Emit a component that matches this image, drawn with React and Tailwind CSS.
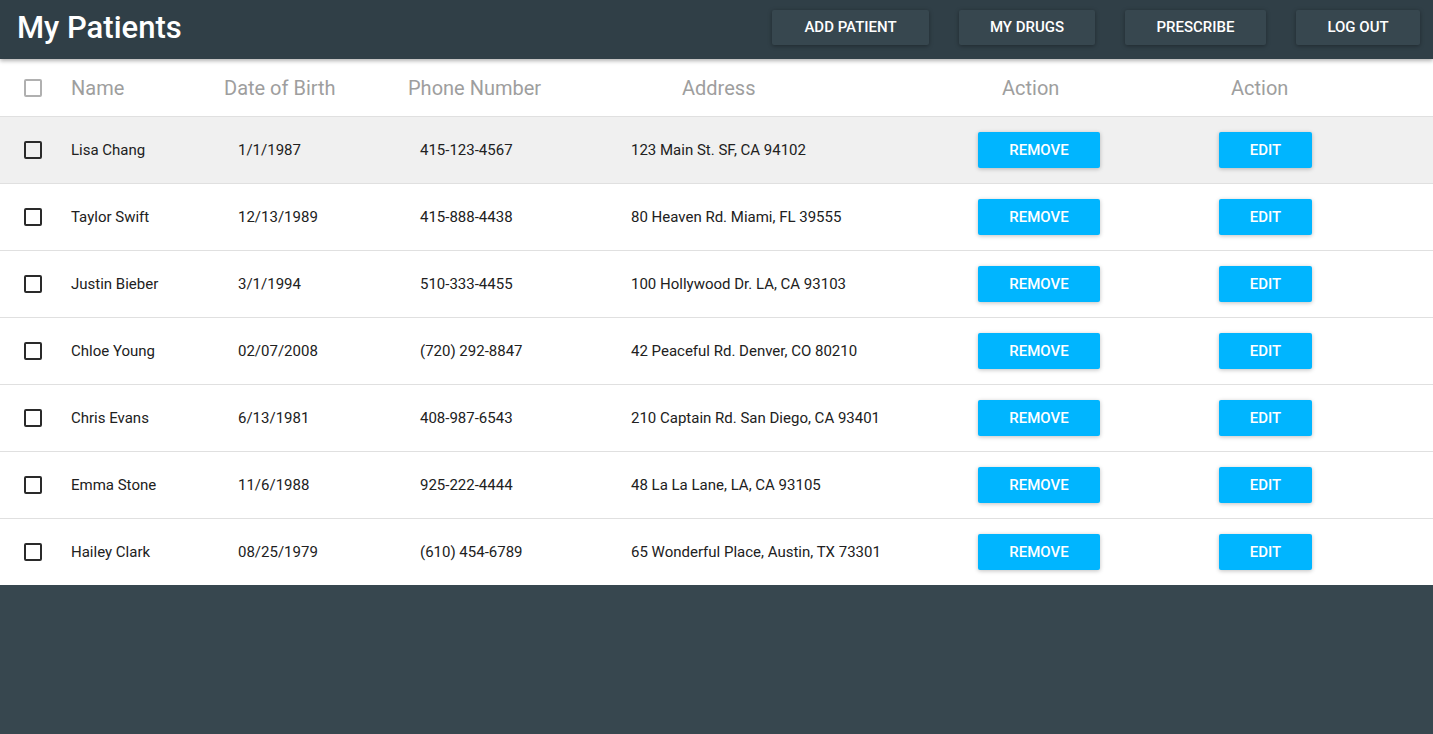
import React from 'react';

const patients = [
  { name: 'Lisa Chang', dob: '1/1/1987', phone: '415-123-4567', address: '123 Main St. SF, CA 94102' },
  { name: 'Taylor Swift', dob: '12/13/1989', phone: '415-888-4438', address: '80 Heaven Rd. Miami, FL 39555' },
  { name: 'Justin Bieber', dob: '3/1/1994', phone: '510-333-4455', address: '100 Hollywood Dr. LA, CA 93103' },
  { name: 'Chloe Young', dob: '02/07/2008', phone: '(720) 292-8847', address: '42 Peaceful Rd. Denver, CO 80210' },
  { name: 'Chris Evans', dob: '6/13/1981', phone: '408-987-6543', address: '210 Captain Rd. San Diego, CA 93401' },
  { name: 'Emma Stone', dob: '11/6/1988', phone: '925-222-4444', address: '48 La La Lane, LA, CA 93105' },
  { name: 'Hailey Clark', dob: '08/25/1979', phone: '(610) 454-6789', address: '65 Wonderful Place, Austin, TX 73301' },
];

function Checkbox({ light }) {
  return (
    <div
      className={`w-[18px] h-[18px] rounded-[2px] border-2 shrink-0 ${light ? 'border-[#b0b0b0]' : 'border-[#2a2a2a]'}`}
    />
  );
}

function NavButton({ children, width }) {
  return (
    <button
      className={`h-[35px] ${width} rounded-[2px] bg-[#37474f] text-white text-[15px] font-medium uppercase shadow-[0_1px_4px_rgba(0,0,0,0.35)]`}
    >
      {children}
    </button>
  );
}

function ActionButton({ children, width }) {
  return (
    <button
      className={`h-[36px] ${width} rounded-[2px] bg-[#00b5ff] text-white text-[15px] font-medium uppercase shadow-[0_1px_4px_rgba(0,0,0,0.25)]`}
    >
      {children}
    </button>
  );
}

export default function App() {
  return (
    <div className="min-h-screen w-full bg-[#37474f] font-['Roboto',sans-serif]">
      <header className="h-[59px] bg-[#303f47] flex items-center justify-between pl-[17px] pr-[13px] relative z-10 shadow-[0_2px_4px_rgba(0,0,0,0.3)]">
        <h1 className="text-[31px] font-medium text-white leading-none pb-[5px]">My Patients</h1>
        <div className="flex items-center gap-[30px] pb-[4px]">
          <NavButton width="w-[157px]">Add Patient</NavButton>
          <NavButton width="w-[136px]">My Drugs</NavButton>
          <NavButton width="w-[141px]">Prescribe</NavButton>
          <NavButton width="w-[124px]">Log Out</NavButton>
        </div>
      </header>

      <div className="bg-white">
        <div className="h-[58px] flex items-center pl-[24px] border-b border-[#e0e0e0] text-[20px] text-[#9e9e9e]">
          <Checkbox light />
          <div className="ml-[29px] w-[153px]">Name</div>
          <div className="w-[184px]">Date of Birth</div>
          <div className="w-[274px]">Phone Number</div>
          <div className="w-[320px]">Address</div>
          <div className="w-[229px]">Action</div>
          <div>Action</div>
        </div>

        {patients.map((p, i) => {
          const last = i === patients.length - 1;
          return (
            <div
              key={p.name}
              className={`flex items-center pl-[24px] text-[15px] text-[#212121] ${i === 0 ? 'bg-[#f0f0f0]' : 'bg-white'} ${last ? 'h-[66px]' : 'h-[67px] border-b border-[#e0e0e0]'}`}
            >
              <Checkbox />
              <div className="ml-[29px] w-[167px]">{p.name}</div>
              <div className="w-[182px]">{p.dob}</div>
              <div className="w-[211px]">{p.phone}</div>
              <div className="w-[347px]">{p.address}</div>
              <div className="w-[241px]">
                <ActionButton width="w-[122px]">Remove</ActionButton>
              </div>
              <ActionButton width="w-[93px]">Edit</ActionButton>
            </div>
          );
        })}
      </div>
    </div>
  );
}
